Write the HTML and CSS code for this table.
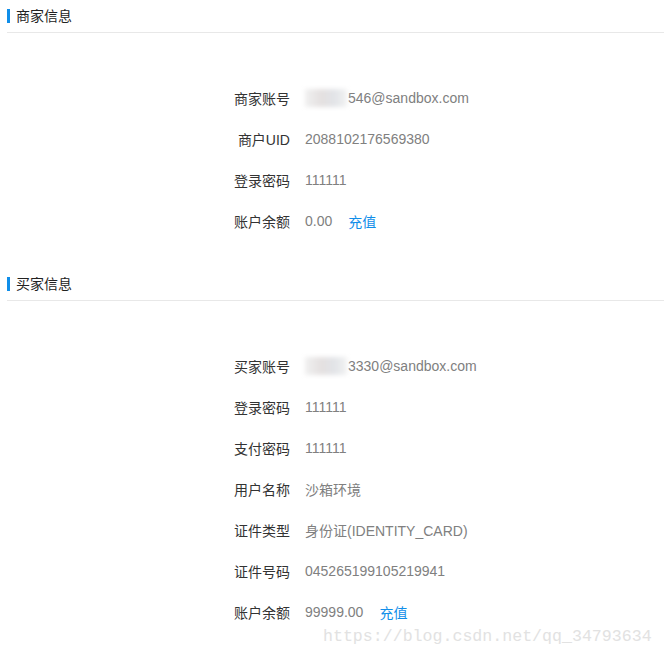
FILE: index.html
```html
<!DOCTYPE html>
<html lang="zh">
<head>
<meta charset="utf-8">
<link rel="stylesheet" href="styles.css">
</head>
<body>
<div class="page">
  <section class="section">
    <h2 class="section-title">商家信息</h2>
    <div class="rows">
      <div class="row"><span class="label">商家账号</span><span class="value"><span class="masked"></span>546@sandbox.com</span></div>
      <div class="row"><span class="label">商户UID</span><span class="value">2088102176569380</span></div>
      <div class="row"><span class="label">登录密码</span><span class="value">111111</span></div>
      <div class="row"><span class="label">账户余额</span><span class="value">0.00</span><a class="link">充值</a></div>
    </div>
  </section>
  <section class="section">
    <h2 class="section-title">买家信息</h2>
    <div class="rows">
      <div class="row"><span class="label">买家账号</span><span class="value"><span class="masked"></span>3330@sandbox.com</span></div>
      <div class="row"><span class="label">登录密码</span><span class="value">111111</span></div>
      <div class="row"><span class="label">支付密码</span><span class="value">111111</span></div>
      <div class="row"><span class="label">用户名称</span><span class="value">沙箱环境</span></div>
      <div class="row"><span class="label">证件类型</span><span class="value">身份证(IDENTITY_CARD)</span></div>
      <div class="row"><span class="label">证件号码</span><span class="value">045265199105219941</span></div>
      <div class="row"><span class="label">账户余额</span><span class="value">99999.00</span><a class="link">充值</a></div>
    </div>
  </section>
</div>
<div class="watermark">https://blog.csdn.net/qq_34793634</div>
</body>
</html>
```
FILE: styles.css
```css
html, body {
  margin: 0;
  padding: 0;
  background: #fff;
}
body {
  font-family: "Liberation Sans", "Noto Sans CJK SC", sans-serif;
  font-size: 14px;
  color: #333;
  width: 664px;
  height: 656px;
  overflow: hidden;
  position: relative;
}
.page {
  padding-left: 7px;
}
.section {
  margin-bottom: 27px;
}
.section-title {
  margin: 0;
  height: 33px;
  box-sizing: border-box;
  border-bottom: 1px solid #e8e8e8;
  display: flex;
  align-items: center;
  font-size: 14px;
  font-weight: normal;
  color: #222;
  padding-left: 9px;
  position: relative;
  padding-bottom: 2px;
}
.section-title::before {
  content: "";
  position: absolute;
  left: 0;
  top: 9px;
  width: 3px;
  height: 14px;
  background: #108ee9;
}
.rows {
  padding-top: 44px;
}
.row {
  height: 41px;
  display: flex;
  align-items: center;
}
.label {
  width: 80px;
  margin-left: 203px;
  text-align: right;
  color: #333;
}
.value {
  margin-left: 15px;
  color: #808080;
  display: inline-flex;
  align-items: center;
}
.masked {
  display: inline-block;
  width: 42px;
  height: 18px;
  background: linear-gradient(90deg, #f0f0f0, #e4e0e0 40%, #e2e4e8 70%, #f2f2f2);
  filter: blur(2px);
  margin-right: 1px;
}
.link {
  margin-left: 16px;
  color: #108ee9;
  cursor: pointer;
}
.watermark {
  position: absolute;
  left: 323px;
  top: 627px;
  font-family: "Liberation Mono", monospace;
  font-size: 16.6px;
  color: #e2e2e2;
  white-space: nowrap;
}
```
